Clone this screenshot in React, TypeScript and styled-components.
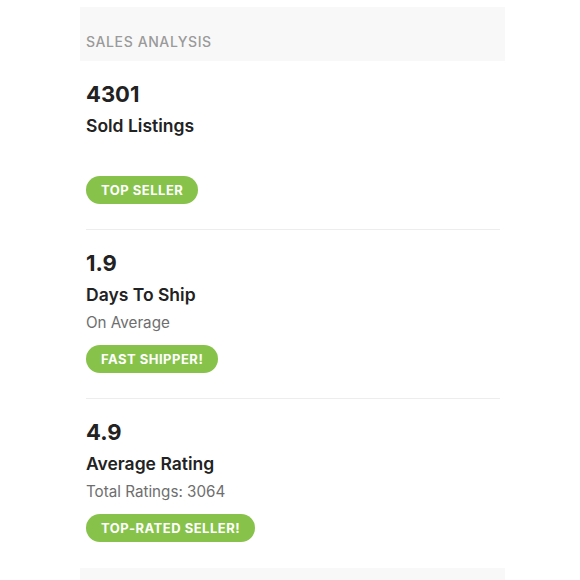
import React from "react";
import styled, { createGlobalStyle } from "styled-components";

const Global = createGlobalStyle`
  html, body { margin: 0; padding: 0; background: #ffffff; }
  body { font-family: Inter, "Noto Sans", sans-serif; -webkit-font-smoothing: antialiased; }
`;

const Page = styled.div`
  width: 580px;
  height: 580px;
  overflow: hidden;
  padding: 7px 0 0 80px;
  box-sizing: border-box;
`;

const Card = styled.div`
  width: 425px;
  display: flex;
  flex-direction: column;
`;

const Header = styled.div`
  height: 54px;
  background: #f8f8f8;
  display: flex;
  align-items: flex-end;
  padding: 0 6px 9px;
  box-sizing: border-box;
`;

const HeaderTitle = styled.div`
  font-size: 14px;
  line-height: 20px;
  color: #9a9a9a;
  font-weight: 500;
  letter-spacing: 0.6px;
`;

const Section = styled.div<{ $last?: boolean }>`
  margin: 0 5px 0 6px;
  padding: 19px 0 ${(p) => (p.$last ? "26px" : "25px")};
  border-bottom: ${(p) => (p.$last ? "none" : "1px solid #ededed")};
  display: flex;
  flex-direction: column;
  align-items: flex-start;
`;

const Value = styled.div`
  font-size: 22px;
  line-height: 28px;
  font-weight: 700;
  color: #222;
`;

const Label = styled.div`
  margin-top: 7px;
  font-size: 17.5px;
  line-height: 22px;
  font-weight: 600;
  color: #222;
`;

const Sub = styled.div`
  margin-top: 6px;
  font-size: 15.2px;
  line-height: 22px;
  color: #6e6e6e;
  min-height: 22px;
`;

const Badge = styled.div`
  margin-top: 11px;
  height: 28px;
  padding: 0 15px;
  border-radius: 14px;
  background: #87c34a;
  color: #fff;
  font-size: 13px;
  font-weight: 700;
  letter-spacing: 0.5px;
  display: flex;
  align-items: center;
`;

const Footer = styled.div`
  height: 30px;
  background: #f8f8f8;
`;

const rows = [
  { value: "4301", label: "Sold Listings", sub: "", badge: "TOP SELLER" },
  { value: "1.9", label: "Days To Ship", sub: "On Average", badge: "FAST SHIPPER!" },
  { value: "4.9", label: "Average Rating", sub: "Total Ratings: 3064", badge: "TOP-RATED SELLER!" },
];

export default function App() {
  return (
    <Page>
      <Global />
      <Card>
        <Header>
          <HeaderTitle>SALES ANALYSIS</HeaderTitle>
        </Header>
        {rows.map((r, i) => (
          <Section key={r.value} $last={i === rows.length - 1}>
            <Value>{r.value}</Value>
            <Label>{r.label}</Label>
            <Sub>{r.sub}</Sub>
            <Badge>{r.badge}</Badge>
          </Section>
        ))}
        <Footer />
      </Card>
    </Page>
  );
}
